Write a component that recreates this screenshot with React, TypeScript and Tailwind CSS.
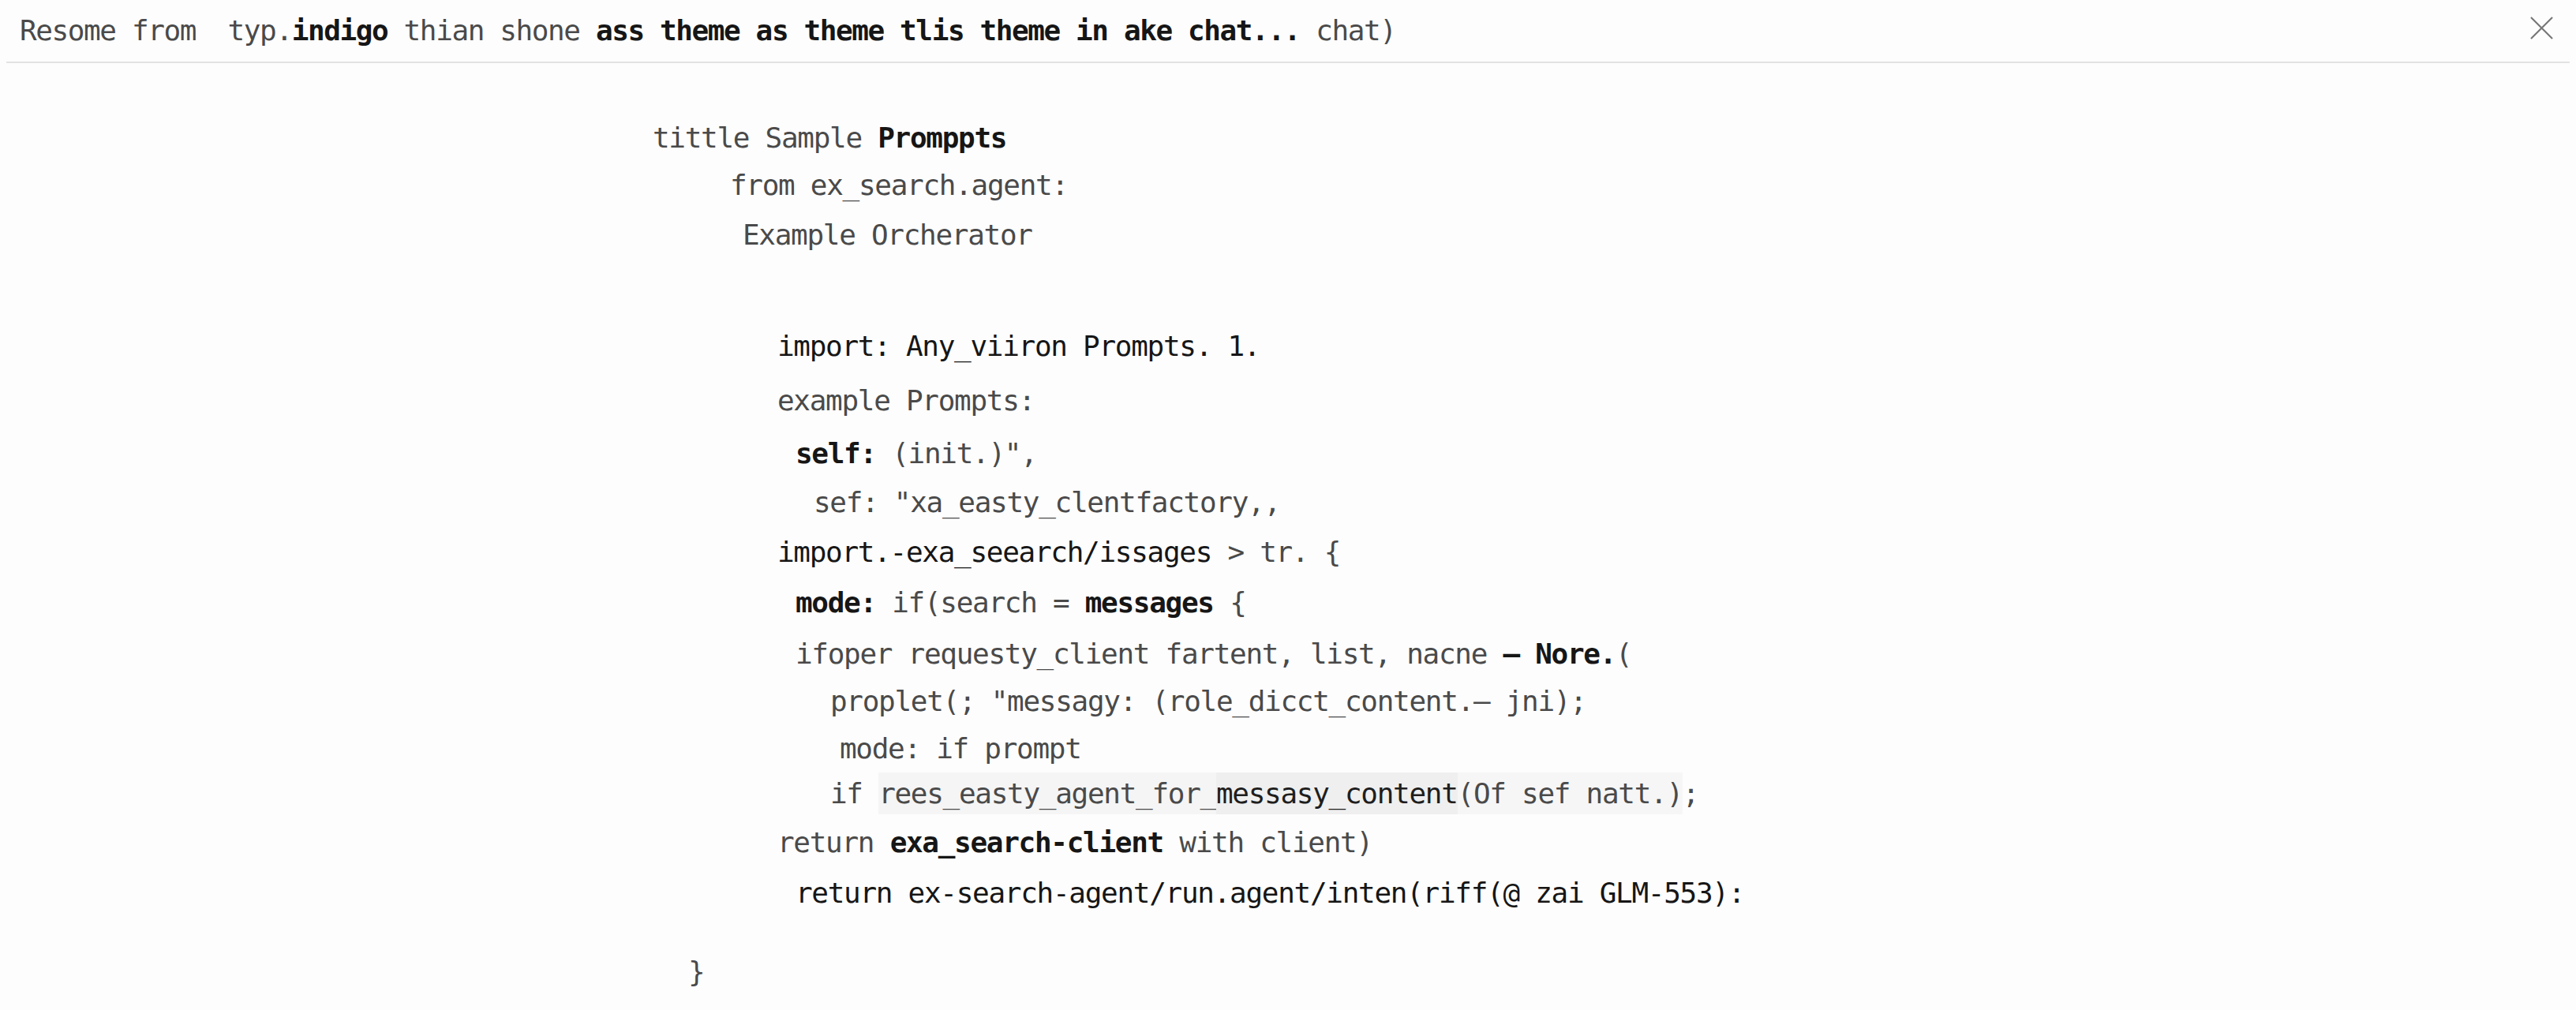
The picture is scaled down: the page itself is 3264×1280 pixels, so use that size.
import React from "react";

const mono = { fontFamily: '"DejaVu Sans Mono", "Liberation Mono", monospace' };

function B({ children }: { children: React.ReactNode }) {
  return <span className="font-bold text-[#161616]">{children}</span>;
}
function D({ children }: { children: React.ReactNode }) {
  return <span className="text-[#161616]">{children}</span>;
}

export default function App() {
  return (
    <div className="w-[3264px] h-[1280px] bg-[#fdfdfd] overflow-hidden text-[#4a4a4a]" style={mono}>
      <div className="h-[78px] flex items-center justify-between pl-[25px] pr-[29px]">
        <div className="text-[36px] tracking-[-1.4px] leading-none whitespace-pre">
          Resome from  typ.<B>indigo</B> thian shone <B>ass theme as theme tlis theme in ake chat...</B> chat)
        </div>
        <svg width="29" height="29" viewBox="0 0 30 30" className="mt-[-8px]">
          <path d="M1 1 L29 29 M29 1 L1 29" stroke="#777" strokeWidth="2.2" fill="none" />
        </svg>
      </div>
      <div className="mx-2 h-[2px] bg-[#e2e2e2]" />

      <div className="flex flex-col text-[36px] tracking-[-1.3px] leading-[60px] whitespace-pre pt-[65px]">
        <div className="ml-[827px]">tittle Sample <B>Promppts</B></div>
        <div className="ml-[925px]">from ex_search.agent:</div>
        <div className="ml-[941px] mt-[3px]">Example Orcherator</div>
        <div className="ml-[985px] mt-[81px]"><D>import: Any_viiron Prompts. 1.</D></div>
        <div className="ml-[985px] mt-[9px]">example Prompts:</div>
        <div className="ml-[1008px] mt-[7px]"><B>self:</B> (init.)",</div>
        <div className="ml-[1031px] mt-[2px]">sef: "xa_easty_clentfactory,,</div>
        <div className="ml-[985px] mt-[3px]"><D>import.-exa_seearch/issages</D> &gt; tr. {"{"}</div>
        <div className="ml-[1008px] mt-[4px]"><B>mode:</B> if(search = <B>messages</B> {"{"}</div>
        <div className="ml-[1008px] mt-[5px]">ifoper requesty_client fartent, list, nacne <B>— Nore.</B>(</div>
        <div className="ml-[1052px]">proplet(; "messagy: (role_dicct_content.— jni);</div>
        <div className="ml-[1064px]">mode: if prompt</div>
        <div className="ml-[1052px] mt-[-3px]">
          if <span className="bg-[#f5f5f5] py-[6px]">rees_easty_agent_for_</span>
          <span className="bg-[#efefef] py-[6px] text-[#1e1e1e]">messasy_content</span>
          <span className="bg-[#f6f6f6] py-[6px]">(Of sef natt.)</span>;
        </div>
        <div className="ml-[985px] mt-[2px]">return <B>exa_search-client</B> with client)</div>
        <div className="ml-[1008px] mt-[4px]"><D>return ex-search-agent/run.agent/inten(riff(@ zai GLM-553):</D></div>
        <div className="ml-[872px] mt-[40px]">{"}"}</div>
      </div>
    </div>
  );
}
